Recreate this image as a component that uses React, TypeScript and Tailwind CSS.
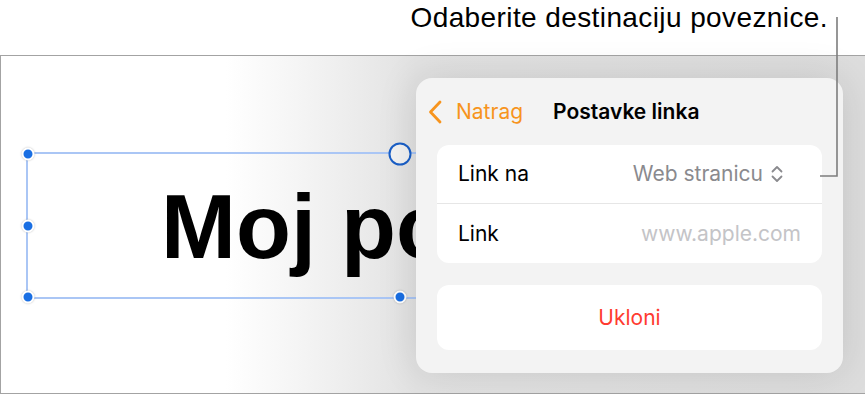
import React from "react";

function Dot({ className }: { className: string }) {
  return (
    <div
      className={`absolute w-[13px] h-[13px] rounded-full bg-[#1a6fe3] border-2 border-white shadow-[0_0_2px_rgba(0,0,0,0.25)] -translate-x-1/2 -translate-y-1/2 ${className}`}
    />
  );
}

export default function App() {
  return (
    <div className="relative w-[865px] h-[394px] bg-white overflow-hidden font-['Inter',sans-serif]">
      {/* callout text */}
      <div className="h-[55px] flex justify-end items-start pr-[37px] pt-[2px]">
        <span className="font-['Liberation_Sans',sans-serif] text-[28px] leading-[32px] text-black tracking-[0.4px]">
          Odaberite destinaciju poveznice.
        </span>
      </div>

      {/* canvas */}
      <div className="relative h-[339px] border-t border-l border-b border-[#a3a3a3] bg-[linear-gradient(to_right,#ffffff_0%,#ffffff_26%,#f4f4f4_35%,#e2e2e2_48%,#dddddd_100%)]">
        {/* text box selection */}
        <div className="absolute left-[25px] top-[96px] w-[747px] h-[147px] border-2 border-[#aac6f5]">
          <div className="pl-[133px] pt-[28px] font-['Liberation_Sans',sans-serif] font-bold text-[90px] leading-[90px] text-black whitespace-nowrap">
            Moj po
          </div>
          <Dot className="left-0 top-0" />
          <Dot className="left-0 top-1/2" />
          <Dot className="left-0 top-full" />
          <Dot className="left-[372px] top-full" />
          <div className="absolute left-[372px] top-0 w-[23px] h-[23px] rounded-full border-2 border-[#1a5fc7] bg-[#f2f2f2] -translate-x-1/2 -translate-y-1/2" />
        </div>

        {/* popover */}
        <div className="absolute left-[415px] top-[22px] w-[427px] h-[295px] rounded-[16px] bg-[#f3f3f3] shadow-[0_0_40px_rgba(0,0,0,0.12)] flex flex-col px-[21px]">
          <div className="h-[67px] flex items-center">
            <svg width="16" height="24" viewBox="0 0 16 24" className="ml-[-10px] mr-[13px]">
              <path d="M13 2 L3.5 12 L13 22" fill="none" stroke="#f7941d" strokeWidth="2.8" strokeLinecap="round" strokeLinejoin="round" />
            </svg>
            <span className="text-[21px] text-[#f7941d]">Natrag</span>
            <span className="ml-[30px] text-[21px] font-semibold text-black">Postavke linka</span>
          </div>
          <div className="rounded-[12px] bg-white flex flex-col">
            <div className="h-[59px] flex items-center pl-[21px] pr-[40px] border-b border-[#e6e6e6]">
              <span className="text-[21px] text-black">Link na</span>
              <span className="ml-auto text-[21px] text-[#8a8a8e]">Web stranicu</span>
              <svg width="14" height="18" viewBox="0 0 14 18" className="ml-[7px] mr-[-2px]">
                <path d="M2.5 6.5 L7 2 L11.5 6.5 M2.5 11.5 L7 16 L11.5 11.5" fill="none" stroke="#8a8a8e" strokeWidth="1.8" strokeLinecap="round" strokeLinejoin="round" />
              </svg>
            </div>
            <div className="h-[59px] flex items-center pl-[21px] pr-[21px]">
              <span className="text-[21px] text-black">Link</span>
              <span className="ml-auto text-[21px] text-[#c4c4c7]">www.apple.com</span>
            </div>
          </div>
          <div className="mt-[22px] h-[65px] rounded-[12px] bg-white flex items-center justify-center">
            <span className="text-[21px] text-[#ff3b30]">Ukloni</span>
          </div>
        </div>
      </div>

      {/* callout leader line */}
      <svg className="absolute left-0 top-0 pointer-events-none" width="865" height="394">
        <path d="M837 17 L837 176 L820 176" fill="none" stroke="#7d7d7d" strokeWidth="1.6" />
      </svg>
    </div>
  );
}
